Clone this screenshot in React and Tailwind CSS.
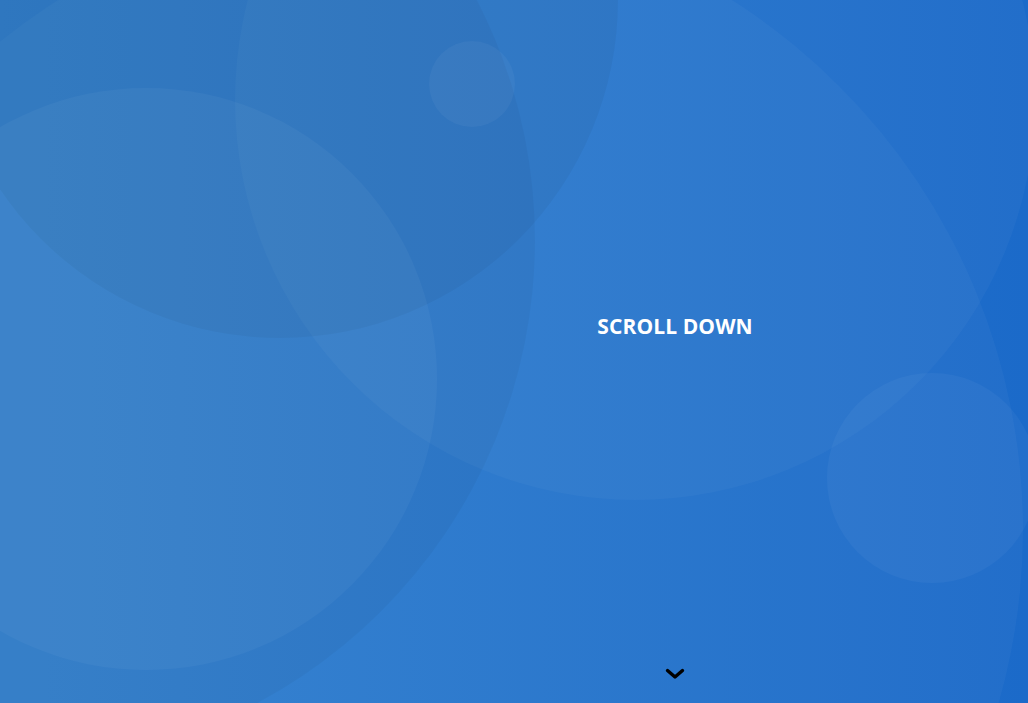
import React from 'react';

const circles = [
  // big soft rings behind the hero
  { cls: 'left-[-233px] top-[-98px] w-[1256px] h-[1256px] bg-white/[0.03]' },
  { cls: 'left-[-515px] top-[-285px] w-[1050px] h-[1050px] bg-black/[0.035]' },
  { cls: 'left-[235px] top-[-300px] w-[800px] h-[800px] bg-white/[0.03]' },
  { cls: 'left-[-58px] top-[-338px] w-[676px] h-[676px] bg-black/[0.04]' },
  { cls: 'left-[-145px] top-[88px] w-[582px] h-[582px] bg-white/[0.035]' },
  { cls: 'left-[429px] top-[41px] w-[86px] h-[86px] bg-white/[0.04]' },
  { cls: 'left-[827px] top-[373px] w-[210px] h-[210px] bg-white/[0.035]' },
];

export default function App() {
  return (
    <div className="relative h-[703px] w-full overflow-hidden bg-gradient-to-r from-[#3381cf] to-[#1b6ac9] font-['Open_Sans',sans-serif]">
      {circles.map((c, i) => (
        <div key={i} className={'absolute rounded-full ' + c.cls} />
      ))}

      <div className="relative flex h-full">
        <div className="w-[322px] shrink-0" />
        <main className="flex flex-1 flex-col items-center">
          <h1 className="mt-[311px] text-[21px] font-bold leading-[30px] tracking-[0.1px] text-white">
            SCROLL DOWN
          </h1>
          <div className="mt-auto mb-[23px]">
            <svg width="20" height="12" viewBox="0 0 20 12" fill="none">
              <path d="M2.5 2.5 L10 9 L17.5 2.5" stroke="#000" strokeWidth="3.4" strokeLinecap="round" strokeLinejoin="round" />
            </svg>
          </div>
        </main>
      </div>
    </div>
  );
}
